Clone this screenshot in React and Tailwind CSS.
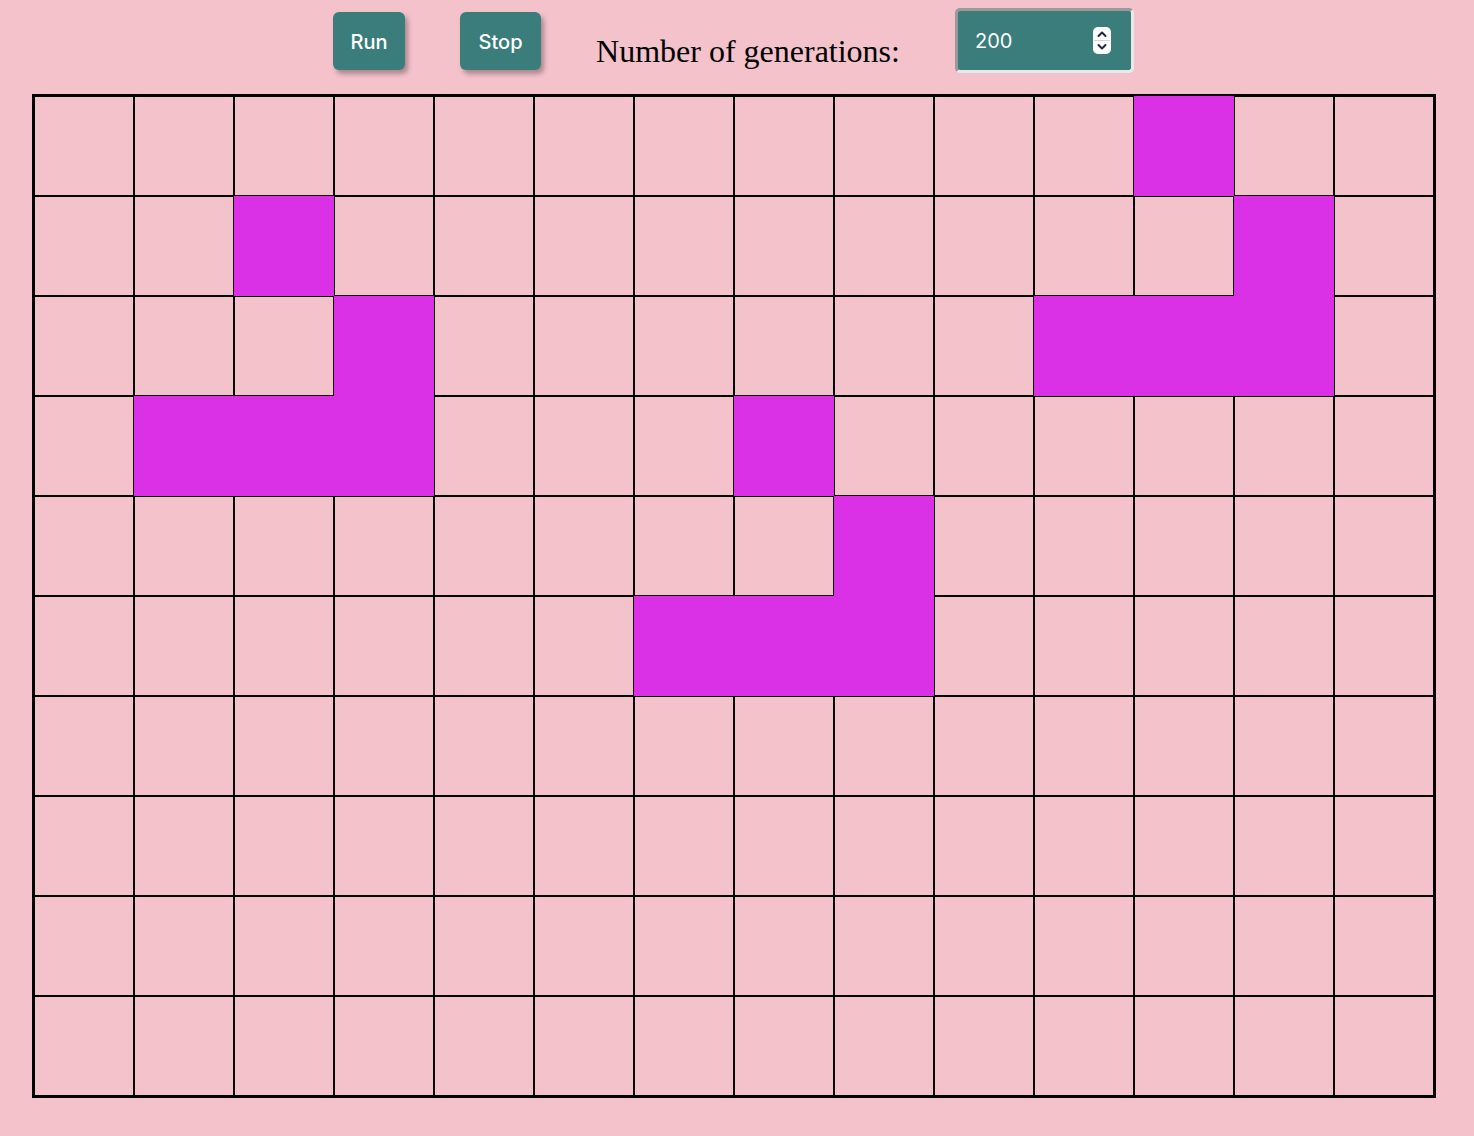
import React, { useState } from 'react';

const ROWS = 10;
const COLS = 14;

// live cells as "row-col"
const START = [
    '0-11',
    '1-2', '1-12',
    '2-3', '2-10', '2-11', '2-12',
    '3-1', '3-2', '3-3', '3-7',
    '4-8',
    '5-6', '5-7', '5-8',
];

const Spinner = () => (
    <svg width="18" height="27" viewBox="0 0 18 27" className="shrink-0">
        <rect x="0" y="0" width="18" height="27" rx="5" fill="#ffffff" />
        <line x1="1" y1="13.5" x2="17" y2="13.5" stroke="#d4d4d4" strokeWidth="1" />
        <path d="M5.5 9 L9 5.5 L12.5 9" fill="none" stroke="#1f2937" strokeWidth="2" strokeLinecap="round" strokeLinejoin="round" />
        <path d="M5.5 18 L9 21.5 L12.5 18" fill="none" stroke="#1f2937" strokeWidth="2" strokeLinecap="round" strokeLinejoin="round" />
    </svg>
);

const App = () => {
    const [alive, setAlive] = useState(new Set(START));

    const toggle = (key) => {
        const next = new Set(alive);
        if (next.has(key)) next.delete(key);
        else next.add(key);
        setAlive(next);
    };

    return (
        <div className="min-h-screen w-full bg-[#f4c2cb] pb-10" style={{ minHeight: '1136px' }}>
            {/* Controls */}
            <div className="flex items-start justify-center gap-[55px] pt-2 pr-[7px] h-[94px]">
                <button className="mt-1 pt-[2px] h-[58px] w-[72px] rounded-md bg-[#3a7d7b] text-white text-[20px] font-medium font-['Inter',sans-serif] shadow-[3px_4px_5px_rgba(0,0,0,0.3)]">
                    Run
                </button>
                <button className="mt-1 pt-[2px] h-[58px] w-[81px] rounded-md bg-[#3a7d7b] text-white text-[20px] font-medium font-['Inter',sans-serif] shadow-[3px_4px_5px_rgba(0,0,0,0.3)]">
                    Stop
                </button>
                <label className="mt-[26px] text-[32px] leading-[34px] text-black font-['Liberation_Serif','Times_New_Roman',serif]">
                    Number of generations:
                </label>
                <div className="flex items-center justify-between h-[65px] w-[179px] rounded-[5px] bg-[#3a7d7b] border-[3px] border-t-[#9a9a9a] border-l-[#9a9a9a] border-b-[#e9e9e9] border-r-[#e9e9e9] pl-[17px] pr-[20px]">
                    <span className="text-white text-[20px] font-['Inter',sans-serif]">200</span>
                    <Spinner />
                </div>
            </div>

            {/* Board */}
            <div className="ml-8 w-fit border-2 border-black grid grid-cols-[repeat(14,100px)]">
                {Array.from({ length: ROWS }).map((_, r) =>
                    Array.from({ length: COLS }).map((_, c) => {
                        const key = `${r}-${c}`;
                        const on = alive.has(key);
                        return (
                            <div
                                key={key}
                                onClick={() => toggle(key)}
                                className={`h-[100px] w-[100px] border ${on ? 'bg-[#db31e6] border-[#db31e6]' : 'bg-[#f4c2cb] border-black'}`}
                            />
                        );
                    })
                )}
            </div>
        </div>
    );
};

export default App;
